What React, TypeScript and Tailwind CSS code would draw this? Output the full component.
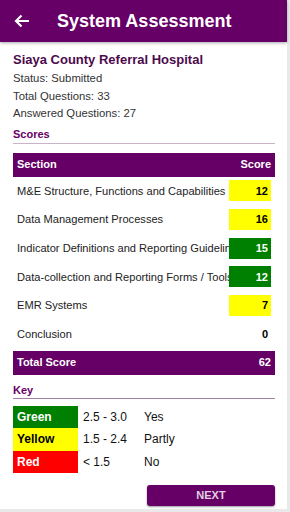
import React from 'react';

const rows = [
  { name: 'M&E Structure, Functions and Capabilities', score: 12, color: 'bg-[#ffff00] text-black' },
  { name: 'Data Management Processes', score: 16, color: 'bg-[#ffff00] text-black' },
  { name: 'Indicator Definitions and Reporting Guidelines', score: 15, color: 'bg-[#008000] text-white' },
  { name: 'Data-collection and Reporting Forms / Tools', score: 12, color: 'bg-[#008000] text-white' },
  { name: 'EMR Systems', score: 7, color: 'bg-[#ffff00] text-black' },
  { name: 'Conclusion', score: 0, color: 'text-black' },
];

const keys = [
  { label: 'Green', range: '2.5 - 3.0', meaning: 'Yes', color: 'bg-[#008000] text-white' },
  { label: 'Yellow', range: '1.5 - 2.4', meaning: 'Partly', color: 'bg-[#ffff00] text-black' },
  { label: 'Red', range: '< 1.5', meaning: 'No', color: 'bg-[#ff0000] text-white' },
];

export default function App() {
  return (
    <div
      className="w-[290px] h-[512px] bg-[#e9e9e9] overflow-hidden"
      style={{ fontFamily: '"Liberation Sans", Arial, sans-serif' }}
    >
      <div className="w-[287px] h-[509px] bg-white flex flex-col">
        {/* App bar */}
        <div className="h-[42px] bg-[#660066] flex items-center shadow-[0_1px_3px_rgba(0,0,0,0.35)] shrink-0">
          <svg width="16" height="14" viewBox="0 0 16 14" className="ml-[14px]">
            <path d="M15 7H2M7.5 1.5L2 7l5.5 5.5" stroke="white" strokeWidth="2.2" fill="none" />
          </svg>
          <h1 className="ml-[27px] text-white text-[18px] font-bold">System Assessment</h1>
        </div>

        <div className="pl-[13px] pr-[12px] pt-[9px]">
          <div className="text-[#4d0a4d] text-[13px] font-bold leading-[18px]">Siaya County Referral Hospital</div>
          <div className="text-[#333] text-[11.3px] leading-[17.5px] mt-[1px]">Status: Submitted</div>
          <div className="text-[#333] text-[11.3px] leading-[17.5px]">Total Questions: 33</div>
          <div className="text-[#333] text-[11.3px] leading-[17.5px]">Answered Questions: 27</div>

          <div className="mt-[4px] text-[#660066] text-[11px] font-bold leading-[14px] pb-[2px] border-b border-[#c9b3c9]">Scores</div>

          {/* Score table */}
          <div className="mt-[9px]">
            <div className="h-[24px] bg-[#660066] text-white text-[11px] font-bold flex items-center justify-between px-[4px]">
              <span>Section</span>
              <span>Score</span>
            </div>
            {rows.map((r) => (
              <div key={r.name} className="h-[28.7px] flex items-center pl-[4px] pr-[4px]">
                <div className="flex-1 min-w-0 overflow-hidden whitespace-nowrap text-[11.1px] text-[#222]">{r.name}</div>
                <div className={`w-[42px] h-[21px] flex items-center justify-end pr-[3px] text-[11px] font-bold ${r.color}`}>
                  {r.score}
                </div>
              </div>
            ))}
            <div className="mt-[2px] h-[24px] bg-[#660066] text-white text-[11px] font-bold flex items-center justify-between px-[4px]">
              <span>Total Score</span>
              <span>62</span>
            </div>
          </div>

          <div className="mt-[8px] text-[#660066] text-[11px] font-bold leading-[14px] pb-[1px] border-b border-[#a27ea2]">Key</div>

          {/* Key table */}
          <div className="mt-[7px]">
            {keys.map((k) => (
              <div key={k.label} className="h-[22.5px] flex items-center text-[12px]">
                <div className={`w-[65px] h-full flex items-center pl-[4px] font-bold ${k.color}`}>{k.label}</div>
                <div className="w-[66px] pl-[5px] text-[#111]">{k.range}</div>
                <div className="text-[#111]">{k.meaning}</div>
              </div>
            ))}
          </div>

          <div className="flex justify-end mt-[12px]">
            <button className="w-[128px] h-[21px] rounded-[3px] bg-[#660066] text-[#e0d0e0] text-[11px] font-bold shadow-[0_1px_2px_rgba(0,0,0,0.4)]">
              NEXT
            </button>
          </div>
        </div>
      </div>
    </div>
  );
}
